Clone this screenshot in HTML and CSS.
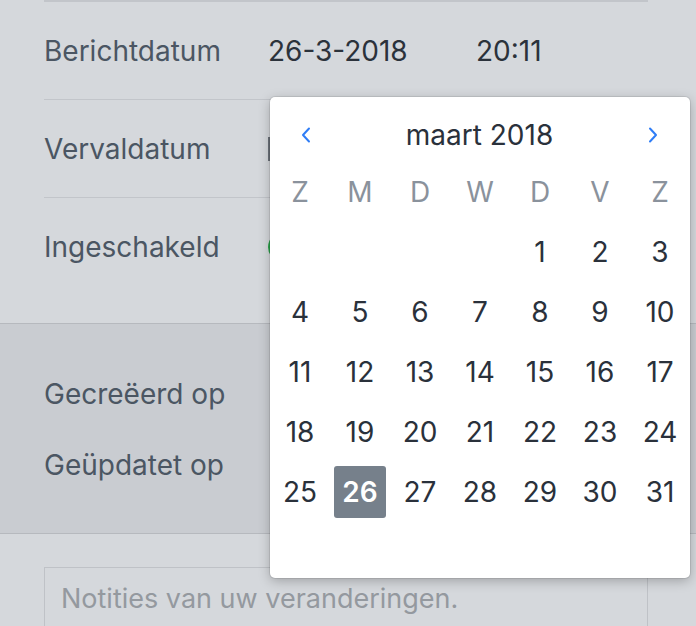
FILE: index.html
```html
<!DOCTYPE html>
<html lang="nl">
<head>
  <meta charset="UTF-8" />
  <meta name="viewport" content="width=device-width, initial-scale=1.0"/>
  <title>Bericht bewerken</title>
  <link rel="stylesheet" href="styles.css">
</head>
<body>

  <!-- Message details -->
  <section class="fields">
    <div class="field">
      <span class="label">Berichtdatum</span>
      <span class="value date">26-3-2018</span>
      <span class="value">20:11</span>
    </div>
    <div class="field">
      <span class="label">Vervaldatum</span>
      <span class="input-stub"></span>
    </div>
    <div class="field">
      <span class="label">Ingeschakeld</span>
      <span class="toggle"></span>
    </div>
  </section>

  <section class="meta">
    <div class="meta-row"><span class="label">Gecreëerd op</span></div>
    <div class="meta-row"><span class="label">Geüpdatet op</span></div>
  </section>

  <section class="notes">
    <textarea placeholder="Notities van uw veranderingen."></textarea>
  </section>

  <!-- Date picker popup -->
  <div class="datepicker">
    <div class="dp-head">
      <span class="dp-arrow">
        <svg width="10" height="16" viewBox="0 0 10 16"><polyline points="8,1.5 2,8 8,14.5" fill="none" stroke="#2f7df6" stroke-width="2" stroke-linecap="round" stroke-linejoin="round"/></svg>
      </span>
      <span class="dp-title">maart 2018</span>
      <span class="dp-arrow">
        <svg width="10" height="16" viewBox="0 0 10 16"><polyline points="2,1.5 8,8 2,14.5" fill="none" stroke="#2f7df6" stroke-width="2" stroke-linecap="round" stroke-linejoin="round"/></svg>
      </span>
    </div>
    <div class="dp-grid">
      <span class="dp-wd">Z</span><span class="dp-wd">M</span><span class="dp-wd">D</span><span class="dp-wd">W</span><span class="dp-wd">D</span><span class="dp-wd">V</span><span class="dp-wd">Z</span>
      <span></span><span></span><span></span><span></span>
      <span class="dp-day">1</span><span class="dp-day">2</span><span class="dp-day">3</span>
      <span class="dp-day">4</span><span class="dp-day">5</span><span class="dp-day">6</span><span class="dp-day">7</span><span class="dp-day">8</span><span class="dp-day">9</span><span class="dp-day">10</span>
      <span class="dp-day">11</span><span class="dp-day">12</span><span class="dp-day">13</span><span class="dp-day">14</span><span class="dp-day">15</span><span class="dp-day">16</span><span class="dp-day">17</span>
      <span class="dp-day">18</span><span class="dp-day">19</span><span class="dp-day">20</span><span class="dp-day">21</span><span class="dp-day">22</span><span class="dp-day">23</span><span class="dp-day">24</span>
      <span class="dp-day">25</span><span class="dp-day selected"><b>26</b></span><span class="dp-day">27</span><span class="dp-day">28</span><span class="dp-day">29</span><span class="dp-day">30</span><span class="dp-day">31</span>
    </div>
  </div>

</body>
</html>
```

FILE: styles.css
```css
* {
  margin: 0;
  padding: 0;
  box-sizing: border-box;
  font-family: 'Inter', 'Liberation Sans', sans-serif;
}

body, html {
  height: 100%;
  overflow: hidden;
}

body {
  background-color: #d5d8dc;
  font-size: 28px;
  color: #2b323b;
}

.label {
  color: #4b5663;
}

.fields {
  margin: 0 48px 0 44px;
  border-top: 2px solid #c2c5ca;
  padding-bottom: 28px;
}

.field {
  display: flex;
  align-items: center;
  height: 98px;
  border-bottom: 1px solid #c2c5ca;
}

.field:last-child {
  border-bottom: none;
  height: 97px;
}

.field .label {
  width: 224px;
}

.value.date {
  width: 208px;
}

.input-stub {
  width: 200px;
  height: 24px;
  border-left: 2px solid #6c727a;
}

.toggle {
  width: 52px;
  height: 30px;
  border-radius: 15px;
  background-color: #2aa44a;
}

.meta {
  background-color: #c9ccd1;
  border-top: 1px solid #b6b9be;
  border-bottom: 1px solid #b6b9be;
  padding: 34px 44px 33px;
}

.meta-row {
  display: flex;
  align-items: center;
  height: 71px;
}

.notes {
  padding: 33px 48px 0 44px;
}

.notes textarea {
  display: block;
  width: 100%;
  height: 90px;
  padding: 14px 16px;
  border: 1px solid #bfc2c7;
  background: transparent;
  font-size: 27px;
  line-height: 34px;
  resize: none;
  outline: none;
}

.notes textarea::placeholder {
  color: #94999f;
}

.datepicker {
  position: absolute;
  top: 97px;
  left: 270px;
  width: 420px;
  height: 481px;
  padding-top: 13px;
  background-color: #ffffff;
  border-radius: 5px;
  box-shadow: 0 0 0 1px rgba(0, 0, 0, 0.08), 0 3px 12px rgba(0, 0, 0, 0.25);
}

.dp-head {
  display: flex;
  align-items: center;
  justify-content: space-between;
  height: 50px;
  padding: 0 32px 0 31px;
  margin-bottom: 2px;
}

.dp-arrow {
  display: flex;
}

.dp-title {
  color: #2a313b;
}

.dp-grid {
  display: grid;
  grid-template-columns: repeat(7, 60px);
  grid-auto-rows: 60px;
}

.dp-grid span {
  display: flex;
  align-items: center;
  justify-content: center;
}

.dp-wd {
  color: #8a929c;
}

.dp-day {
  color: #2a313b;
}

.dp-day.selected b {
  display: flex;
  align-items: center;
  justify-content: center;
  width: 52px;
  height: 52px;
  border-radius: 3px;
  background-color: #76808b;
  color: #ffffff;
  font-weight: 600;
}
```
